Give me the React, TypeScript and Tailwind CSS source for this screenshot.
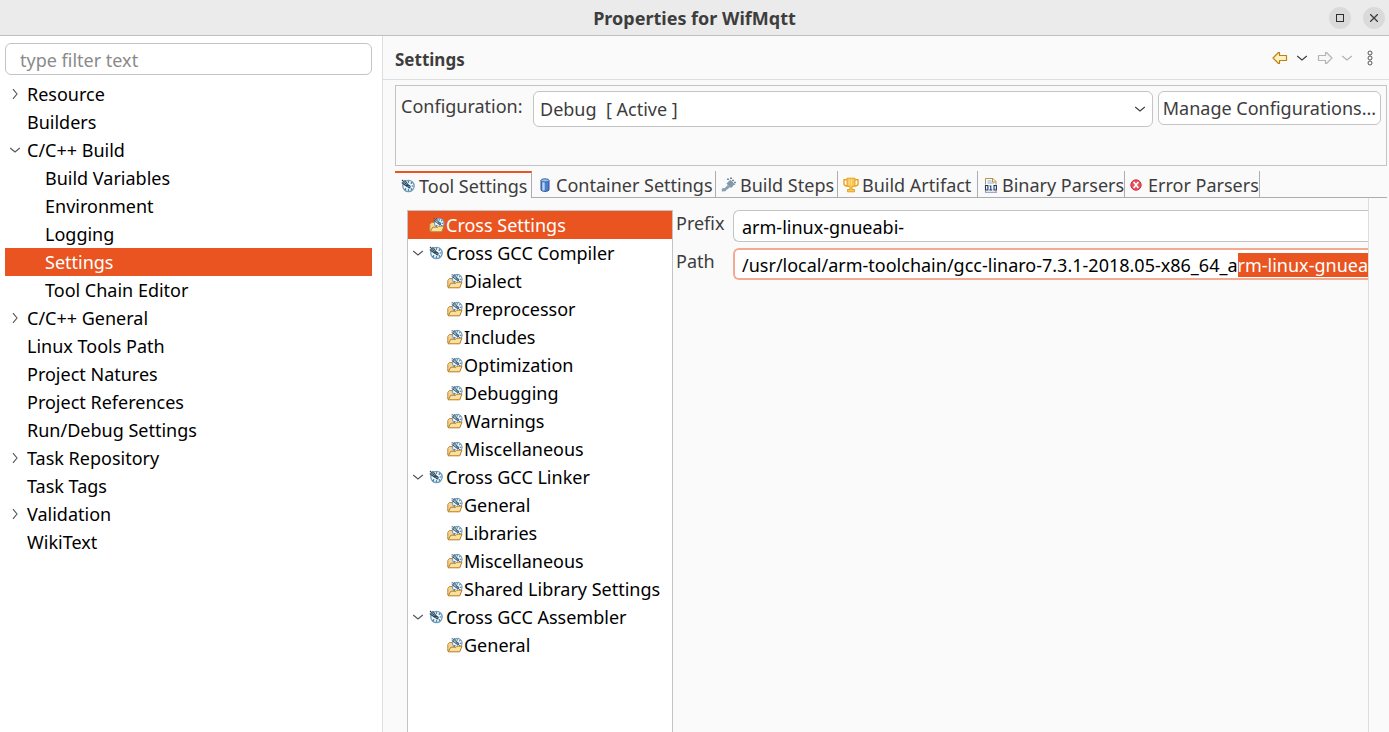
import { useEffect, useRef } from "react";

type Node = { label: string; depth: number; state?: "open" | "closed"; selected?: boolean };

const PAGES: Node[] = [
  { label: "Resource", depth: 0, state: "closed" },
  { label: "Builders", depth: 0 },
  { label: "C/C++ Build", depth: 0, state: "open" },
  { label: "Build Variables", depth: 1 },
  { label: "Environment", depth: 1 },
  { label: "Logging", depth: 1 },
  { label: "Settings", depth: 1, selected: true },
  { label: "Tool Chain Editor", depth: 1 },
  { label: "C/C++ General", depth: 0, state: "closed" },
  { label: "Linux Tools Path", depth: 0 },
  { label: "Project Natures", depth: 0 },
  { label: "Project References", depth: 0 },
  { label: "Run/Debug Settings", depth: 0 },
  { label: "Task Repository", depth: 0, state: "closed" },
  { label: "Task Tags", depth: 0 },
  { label: "Validation", depth: 0, state: "closed" },
  { label: "WikiText", depth: 0 },
];

const TOOLS: Node[] = [
  { label: "Cross Settings", depth: 0, selected: true },
  { label: "Cross GCC Compiler", depth: 0, state: "open" },
  { label: "Dialect", depth: 1 },
  { label: "Preprocessor", depth: 1 },
  { label: "Includes", depth: 1 },
  { label: "Optimization", depth: 1 },
  { label: "Debugging", depth: 1 },
  { label: "Warnings", depth: 1 },
  { label: "Miscellaneous", depth: 1 },
  { label: "Cross GCC Linker", depth: 0, state: "open" },
  { label: "General", depth: 1 },
  { label: "Libraries", depth: 1 },
  { label: "Miscellaneous", depth: 1 },
  { label: "Shared Library Settings", depth: 1 },
  { label: "Cross GCC Assembler", depth: 0, state: "open" },
  { label: "General", depth: 1 },
];

function Chevron({ open, className = "" }: { open: boolean; className?: string }) {
  return (
    <svg viewBox="0 0 12 12" className={"size-3 shrink-0 " + className} fill="none" stroke="currentColor" strokeWidth="1.1" aria-hidden="true">
      <path d={open ? "M1.200 4l4.800 4l4.800-4" : "M4 1.200l4 4.800l-4 4.800"} />
    </svg>
  );
}

function Dial() {
  return (
    <>
      <circle cx="7.500" cy="7" r="5.700" fill="#eef7fc" stroke="#6d9dbb" strokeWidth="1.300" />
      <path d="M7.500 2.200v1.500M12.300 7h-1.600M7.500 11.800v-1.600M3.700 10.800l1.400-1.400M11 3.500l-1.200 1.200M11 10.500l-1.200-1.200" stroke="#2c6288" strokeWidth="1.200" />
      <path d="M1 1l8 8M3.500 1l4 5M.8 3.500l5.200 4" stroke="#2b4256" strokeWidth="1.100" />
      <path d="M1.500 2.800l1.600-1.600M3 4.500l2-2M4.500 6l1.800-1.800" stroke="#a9c1d0" strokeWidth=".7" />
      <circle cx="8" cy="7.600" r="1.300" fill="#5b95bb" stroke="#1c4263" strokeWidth=".9" />
    </>
  );
}

function DialIcon() {
  return (
    <svg viewBox="0 0 14 14" className="size-3.5 shrink-0" fill="none" aria-hidden="true">
      <Dial />
    </svg>
  );
}

function FolderIcon() {
  return (
    <svg viewBox="0 0 16 16" className="size-4 shrink-0" fill="none" aria-hidden="true">
      <path d="M.8 14V7.500l1.700-2H5l1.500 2H13V14z" fill="#f5d596" stroke="#b8873c" />
      <g transform="translate(4 .3) scale(.84)">
        <Dial />
      </g>
      <path d="M1.200 14.800l2.600-4.600h5.200l1-1h5l-2.300 5.600z" fill="#fbdf9c" stroke="#b8802c" strokeLinejoin="round" />
    </svg>
  );
}

function CylinderIcon() {
  return (
    <svg viewBox="0 0 10 14" className="h-3.5 w-2.5 shrink-0" aria-hidden="true">
      <path d="M1 2.300v9.400c0 2.200 8 2.200 8 0V2.300" fill="#4a7fcb" stroke="#2a4f96" />
      <path d="M3.500 4v8.500" stroke="#b9d5f7" strokeWidth="2.400" />
      <ellipse cx="5" cy="2.400" rx="4" ry="1.600" fill="#9fc2ee" stroke="#3a64a8" />
    </svg>
  );
}

function HammerIcon() {
  return (
    <svg viewBox="0 0 16 16" className="size-4 shrink-0" aria-hidden="true">
      <path d="M.8 14.500v-3l3-.5l3-3l2.200 2.200l-3 2.300l-1.700 1.800z" fill="#8a9fb0" />
      <path d="M5.500 6.500l3.800-3.800l5.200 5l-2 .3l-1.500 2.500h-2z" fill="#8299ac" />
      <path d="M6 2.200h2M9 1.200h2M11 3.500h2M13 5.500h2" stroke="#70899e" strokeWidth="1.500" />
    </svg>
  );
}

function TrophyIcon() {
  return (
    <svg viewBox="0 0 16 16" className="size-4 shrink-0" fill="none" stroke="#e9a224" aria-hidden="true">
      <path d="M4 2.700H1v4.500q.5 1.800 4 1.800M12 2.700h3v4.500q-.5 1.800-4 1.800" strokeWidth="1.400" />
      <path d="M4 1.200h8v6.300q0 2-3 2.500v2.500h2.500v2.300h-7v-2.300H7V10q-3-.5-3-2.500z" fill="#f7c655" />
      <path d="M6.200 2.500v5.500M8.500 2.500v5.500" stroke="#fbe08e" />
    </svg>
  );
}

function BinaryIcon() {
  return (
    <svg viewBox="0 0 14 16" className="h-4 w-3.5 shrink-0" fill="none" aria-hidden="true">
      <path d="M1.500 15V1.500h7.500l3 3V15" fill="#fcfcf6" stroke="#b59349" />
      <path d="M8.500 1.500v3.500H12" stroke="#b59349" />
      <path d="M3.500 4h4M3.500 6h6.500" stroke="#8eabc9" />
      <path d="M1 7.500h12v6H1z" fill="#f6f9fd" />
      <path d="M1.500 8.500h2.400v4.500H1.500zM5.500 9h1.300v4M5.300 13h3M10 8.500h2.400v4.500H10z" stroke="#1d3768" strokeWidth="1.100" />
      <path d="M1 15.300h12" stroke="#8098bb" />
    </svg>
  );
}

function ErrorIcon() {
  return (
    <svg viewBox="0 0 12 12" className="size-3 shrink-0" aria-hidden="true">
      <circle cx="6" cy="6" r="5.200" fill="#e4525c" stroke="#cf3240" />
      <path d="M3.600 3l4.800 6M8.400 3l-4.800 6" stroke="#fff" strokeWidth="1.600" />
    </svg>
  );
}

function Arrow({ right = false }: { right?: boolean }) {
  return (
    <svg viewBox="0 0 16 14" className="h-3.5 w-4" aria-hidden="true">
      <path
        d={right ? "M1.500 4.500h7V1.500h1l5.500 5.500l-5.500 5.500h-1v-3h-7z" : "M14.500 4.500h-7V1.500h-1L1 7l5.500 5.500h1v-3h7z"}
        fill={right ? "#f7f7f7" : "#fff2bf"}
        stroke={right ? "#b5b5b5" : "#bd8118"}
        strokeWidth="1.200"
        strokeLinejoin="round"
      />
    </svg>
  );
}

const TABS = [
  { label: "Tool Settings", icon: <DialIcon />, box: "w-[137px] gap-1 pl-1.5" },
  { label: "Container Settings", icon: <CylinderIcon />, box: "w-[184px] gap-1.5 pl-2" },
  { label: "Build Steps", icon: <HammerIcon />, box: "w-[122px] gap-[3px] pl-[5px]" },
  { label: "Build Artifact", icon: <TrophyIcon />, box: "w-[140px] gap-[3px] pl-[5px]" },
  { label: "Binary Parsers", icon: <BinaryIcon />, box: "w-[147px] gap-1 pl-1.5" },
  { label: "Error Parsers", icon: <ErrorIcon />, box: "w-[135px] gap-1.5 pl-[5px]" },
];

const PATH = "/usr/local/arm-toolchain/gcc-linaro-7.3.1-2018.05-x86_64_arm-linux-gnueabi";

export default function App() {
  const path = useRef<HTMLInputElement>(null);
  useEffect(() => {
    path.current?.focus({ preventScroll: true });
    path.current?.setSelectionRange(PATH.indexOf("rm-linux"), PATH.length);
  }, []);

  return (
    <div className="flex h-screen flex-col overflow-hidden bg-[#fafafa] font-['Noto_Sans',sans-serif] text-[18px] leading-7 text-[#3d3d3d]">
      <header className="flex h-9 shrink-0 items-center border-b border-[#bfbfbf] bg-[#ebebeb] px-1">
        <div className="w-14" />
        <h1 className="flex-1 text-center text-[18px] font-bold">Properties for WifMqtt</h1>
        <div className="flex w-14 gap-3">
          <button aria-label="Maximize" className="flex size-[22px] items-center justify-center rounded-full bg-[#dadada]">
            <span className="size-2 border border-[#2d2d2d]" />
          </button>
          <button aria-label="Close" className="flex size-[22px] items-center justify-center rounded-full bg-[#dadada]">
            <svg viewBox="0 0 8 8" className="size-2" stroke="#3d3d3d" strokeWidth="1.300"><path d="M0 0l8 8M8 0L0 8" /></svg>
          </button>
        </div>
      </header>

      <div className="flex min-h-0 flex-1">
        <nav aria-label="Property pages" className="w-[383px] shrink-0 border-r border-[#dedede] bg-white pt-[7px] pr-2.5 pl-[5px]">
          <input aria-label="Filter" placeholder="type filter text" className="h-8 w-full rounded-md border border-[#c4c4c4] bg-white px-3.5 pt-0.5 outline-none placeholder:text-[#8a8a8a]" />
          <ul className="mt-[5px] text-black">
            {PAGES.map((n) => (
              <li key={n.label} className={"flex h-7 items-center pl-1 " + (n.selected ? "bg-[#e95420] text-white" : "")}>
                <span className={"flex shrink-0 items-center " + (n.depth ? "w-9" : "w-[18px]")}>
                  {n.state && <Chevron open={n.state === "open"} className="text-[#555]" />}
                </span>
                {n.label}
              </li>
            ))}
          </ul>
        </nav>

        <main className="flex min-w-0 flex-1 flex-col">
          <div className="flex h-11 shrink-0 items-center justify-between border-b border-[#dedede] pr-4 pl-3">
            <h2 className="pt-1 text-[17px] font-bold">Settings</h2>
            <div className="flex items-center gap-2">
              <button aria-label="Back"><Arrow /></button>
              <button aria-label="Back history"><Chevron open /></button>
              <button aria-label="Forward" className="ml-px"><Arrow right /></button>
              <button aria-label="Forward history" className="text-[#b0b0b0]"><Chevron open /></button>
              <button aria-label="View menu" className="ml-1.5">
                <svg viewBox="0 0 6 16" className="h-4 w-1.5" fill="none" stroke="#555"><circle cx="3" cy="3" r="2" /><circle cx="3" cy="8" r="2" /><circle cx="3" cy="13" r="2" /></svg>
              </button>
            </div>
          </div>

          <section className="mt-[5px] mr-0.5 ml-3 flex h-[81px] shrink-0 items-start border border-[#c4c4c4] pt-[5px] pr-[5px] pl-[5px]">
            <label htmlFor="config" className="w-[132px] shrink-0 pt-px">Configuration:</label>
            <div className="relative flex-1">
              <select id="config" className="h-9 w-full appearance-none rounded-md border border-[#c4c4c4] bg-white px-1.5 whitespace-pre">
                <option>{"Debug\u00a0 [ Active ]"}</option>
              </select>
              <Chevron open className="pointer-events-none absolute top-3 right-[7px]" />
            </div>
            <button className="ml-[5px] h-[34px] w-[223px] shrink-0 rounded-md border border-[#c4c4c4] bg-white whitespace-nowrap">Manage Configurations...</button>
          </section>

          <div role="tablist" className="mt-[5px] mr-0.5 ml-3 flex h-[27px] shrink-0">
            {TABS.map((t, i) => (
              <button
                key={t.label}
                role="tab"
                aria-selected={i === 0}
                className={"flex shrink-0 items-center border-r border-r-[#adadad] pt-0.5 whitespace-nowrap " + t.box + (i === 0 ? " border-t-2 border-t-[#e95420] pb-0.5" : " border-b border-b-[#adadad]")}
              >
                {t.icon}
                {t.label}
              </button>
            ))}
            <span className="flex-1 border-b border-[#adadad]" />
          </div>

          <div className="mr-5 ml-6 flex min-h-0 flex-1 border-r border-[#dedede] pt-3">
            <ul className="w-[266px] shrink-0 border border-b-0 border-[#c4c4c4] bg-white text-black">
              {TOOLS.map((n, i) => (
                <li key={i} className={"flex h-7 items-center pl-1 whitespace-nowrap " + (n.selected ? "bg-[#e95420] text-white" : "")}>
                  <span className={"flex shrink-0 items-center " + (n.depth ? "w-[35px]" : "w-[17px]")}>
                    {n.state && <Chevron open className="text-[#555]" />}
                  </span>
                  <span className="flex w-[17px] shrink-0 items-center">{n.state ? <DialIcon /> : <FolderIcon />}</span>
                  {n.label}
                </li>
              ))}
            </ul>
            <div className="flex min-w-0 flex-1 flex-col gap-1.5 overflow-hidden pl-[3px]">
              <div className="flex">
                <label htmlFor="prefix" className="w-[57px] shrink-0 leading-[26px]">Prefix</label>
                <input id="prefix" defaultValue="arm-linux-gnueabi-" className="h-8 min-w-0 flex-1 rounded-l-md border border-r-0 border-[#c4c4c4] bg-white pt-0.5 pl-2 text-black outline-none" />
              </div>
              <div className="flex">
                <label htmlFor="path" className="w-[57px] shrink-0 leading-[26px]">Path</label>
                <input id="path" ref={path} defaultValue={PATH} className="h-8 min-w-0 flex-1 rounded-l-md border-2 border-r-0 border-[#f4aa90] bg-white pt-0.5 pl-[7px] text-black caret-transparent outline-none selection:bg-[#e95420] selection:text-white" />
              </div>
            </div>
          </div>
        </main>
      </div>
    </div>
  );
}
